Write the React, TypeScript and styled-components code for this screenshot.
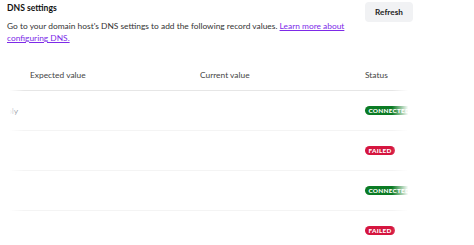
import React, { useLayoutEffect, useRef } from "react"
import styled, { createGlobalStyle } from "styled-components"

const GlobalStyle = createGlobalStyle`
  body {
    margin: 0;
    background: #fff;
    font-family: Lato, "Noto Sans", sans-serif;
    color: #2b2b2b;
  }
`

const Page = styled.div`
  padding: 3px 0 0 7px;
  width: 406px;
`

const Header = styled.div`
  display: flex;
  justify-content: space-between;
  align-items: flex-start;
`

const Intro = styled.div`
  display: flex;
  flex-direction: column;
  gap: 6px;
  max-width: 345px;
`

const Title = styled.div`
  font-size: 8.6px;
  font-weight: 700;
  color: #111;
  line-height: 11px;
`

const Description = styled.div`
  font-size: 8.4px;
  line-height: 12px;
  color: #333;
`

const Link = styled.a`
  color: #7d2ae8;
  text-decoration: underline;
`

const RefreshButton = styled.button`
  margin-top: -1px;
  width: 48px;
  height: 20px;
  border: none;
  border-radius: 4px;
  background: #f1f2f4;
  font-family: inherit;
  font-size: 8.2px;
  font-weight: 700;
  color: #222;
  padding: 0;
`

const TableFrame = styled.div`
  position: relative;
  margin-top: 16px;
  margin-left: 1px;
  width: 402px;
`

const Scroller = styled.div`
  overflow-x: auto;
  scrollbar-width: none;
  &::-webkit-scrollbar {
    display: none;
  }
`

const Grid = styled.div`
  display: grid;
  grid-template-columns: 100px 170px 165px 110px;
  width: 545px;
`

const HeadCell = styled.div`
  font-size: 8.4px;
  color: #444;
  height: 30px;
  display: flex;
  align-items: center;
  padding-left: 12px;
  border-bottom: 1px solid #e6e6e6;
`

const Cell = styled.div<{ $last?: boolean; $end?: boolean }>`
  font-size: 8.4px;
  color: #333;
  height: 39px;
  display: flex;
  align-items: center;
  justify-content: ${(p) => (p.$end ? "flex-end" : "flex-start")};
  padding-left: 12px;
  border-bottom: ${(p) => (p.$last ? "none" : "1px solid #f4f4f4")};
`

const Badge = styled.span<{ $ok: boolean }>`
  display: inline-flex;
  align-items: center;
  height: 9px;
  padding: 0 3.5px;
  border-radius: 5px;
  background: ${(p) => (p.$ok ? "#0b7b24" : "#d5163f")};
  color: #fff;
  font-size: 6.4px;
  font-weight: 900;
  letter-spacing: 0.25px;
  white-space: nowrap;
`

const Fade = styled.div<{ $side: "left" | "right" }>`
  position: absolute;
  top: 0;
  bottom: 0;
  ${(p) => (p.$side === "left" ? "left: 0;" : "right: 0;")}
  width: ${(p) => (p.$side === "left" ? "16px" : "18px")};
  pointer-events: none;
  background: linear-gradient(
    ${(p) => (p.$side === "left" ? "to right" : "to left")},
    #fff 10%,
    rgba(255, 255, 255, 0)
  );
`

const rows = [
  { name: "Apply", ok: true },
  { name: "", ok: false },
  { name: "", ok: true },
  { name: "", ok: false },
]

export default function App() {
  const scrollRef = useRef<HTMLDivElement>(null)

  useLayoutEffect(() => {
    if (scrollRef.current) scrollRef.current.scrollLeft = 90
  }, [])

  return (
    <>
      <GlobalStyle />
      <Page>
        <Header>
          <Intro>
            <Title>DNS settings</Title>
            <Description>
              Go to your domain host's DNS settings to add the following record
              values. <Link href="#">Learn more about configuring DNS.</Link>
            </Description>
          </Intro>
          <RefreshButton>Refresh</RefreshButton>
        </Header>
        <TableFrame>
          <Scroller ref={scrollRef}>
            <Grid>
              <HeadCell>Type</HeadCell>
              <HeadCell>Expected value</HeadCell>
              <HeadCell>Current value</HeadCell>
              <HeadCell>Status</HeadCell>
              {rows.map((row, i) => {
                const last = i === rows.length - 1
                return (
                  <React.Fragment key={i}>
                    <Cell $last={last} $end>
                      {row.name}
                    </Cell>
                    <Cell $last={last} />
                    <Cell $last={last} />
                    <Cell $last={last}>
                      <Badge $ok={row.ok}>
                        {row.ok ? "CONNECTED" : "FAILED"}
                      </Badge>
                    </Cell>
                  </React.Fragment>
                )
              })}
            </Grid>
          </Scroller>
          <Fade $side="left" />
          <Fade $side="right" />
        </TableFrame>
      </Page>
    </>
  )
}
